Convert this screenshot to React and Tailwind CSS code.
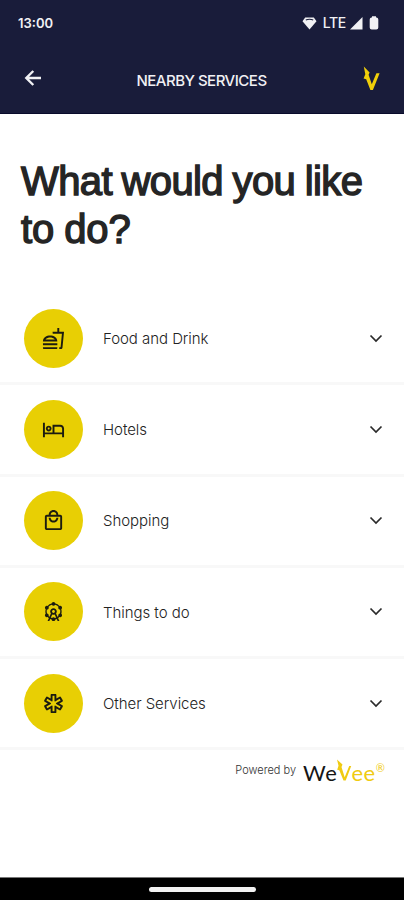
import React from 'react';
import {
    MdOutlineFastfood,
    MdOutlineHotel,
    MdOutlineLocalMall,
    MdOutlineAttractions,
    MdOutlineEmergency,
} from 'react-icons/md';

const services = [
    { label: 'Food and Drink', icon: MdOutlineFastfood },
    { label: 'Hotels', icon: MdOutlineHotel },
    { label: 'Shopping', icon: MdOutlineLocalMall },
    { label: 'Things to do', icon: MdOutlineAttractions },
    { label: 'Other Services', icon: MdOutlineEmergency },
];

function StatusBar() {
    return (
        <div className="h-[46px] pl-[18px] pr-[25px] flex items-center justify-between text-[#f1f1f4]">
            <span className="text-[13px] leading-none font-semibold">13:00</span>
            <div className="flex items-center">
                <svg width="15" height="13" viewBox="0 0 15 13" className="mr-[6px]">
                    <path d="M3.2 0.5h8.6L14.5 4.2 7.5 12.6 0.5 4.2z" fill="currentColor" />
                    <path d="M3.8 3.1q3.7-1.6 7.4 0" fill="none" stroke="#191c3a" strokeWidth="1.1" />
                </svg>
                <span className="text-[14px] leading-none font-medium tracking-[-0.3px] mr-1">LTE</span>
                <svg width="13" height="13" viewBox="0 0 13 13" className="mr-[6px]">
                    <path d="M12.5 0v12.5H0z" fill="currentColor" />
                </svg>
                <svg width="10" height="14" viewBox="0 0 10 14">
                    <path d="M3 0.3h4v1.2h0.8q1.5 0.4 1.5 2v8q0 2-2 2H2.7q-2 0-2-2v-8q0-1.6 1.5-2H3z" fill="currentColor" />
                </svg>
            </div>
        </div>
    );
}

function Header() {
    return (
        <div className="h-[67px] pl-[24px] pr-[24px] flex items-center justify-between text-[#f1f1f4]">
            <svg width="18" height="18" viewBox="0 0 18 18" className="mb-[3px]">
                <path d="M17 9H2.5M9.3 2L2.3 9l7 7" fill="none" stroke="currentColor" strokeWidth="2.4" />
            </svg>
            <h2 className="mt-[2px] mr-[2px] text-[15px] leading-none font-medium tracking-[-0.5px] whitespace-nowrap">
                NEARBY SERVICES
            </h2>
            <svg width="17" height="25" viewBox="0 0 17 25" className="mb-[3px]">
                <path d="M0.8 0.5L6.6 6.4 5.6 8.8 8.8 18.3 13.4 7.2h3.2L9.9 24H7.4L3.2 13.2 0.6 12.6 2.3 8.2z" fill="#f0cf0a" />
            </svg>
        </div>
    );
}

function ServiceRow({ label, icon: Icon }) {
    return (
        <button className="w-full h-[91.25px] pl-[24px] pr-[21px] flex items-center border-b-[3px] border-[#f8f8f8] text-left">
            <span className="size-[59px] shrink-0 rounded-full bg-[#e8cf04] flex items-center justify-center text-[#1c1c10]">
                <Icon size={23} />
            </span>
            <span className="mt-[2px] ml-[20px] flex-1 text-[15px] font-light tracking-[-0.05px] text-[#222]">{label}</span>
            <svg width="14" height="9" viewBox="0 0 14 9">
                <path d="M1.5 1.5L7 7l5.5-5.5" fill="none" stroke="#2a2a2a" strokeWidth="1.7" />
            </svg>
        </button>
    );
}

function WeVeeLogo() {
    return (
        <div className="flex items-start font-['Lato','Liberation_Sans',sans-serif] text-[22px] leading-[26px]">
            <span className="text-[#151515] tracking-[0.6px]">We</span>
            <svg width="16" height="23" viewBox="0 0 16 23" className="-ml-px -mt-px">
                <path d="M1 0.5L6.5 5.5 5.5 8 8.7 18.3 13.2 7h2L9.7 21.5H7.5L3.3 11.2 1.2 10.8 2.5 6.8z" fill="#f0cb12" />
            </svg>
            <span className="-ml-px text-[#f0cb12] tracking-[0.6px]">ee</span>
            <span className="text-[#f0cb12] text-[11px] leading-[15px]">®</span>
        </div>
    );
}

export default function App() {
    return (
        <div className="w-[404px] h-[900px] flex flex-col bg-white overflow-hidden font-['Inter','Liberation_Sans',sans-serif]">
            <div className="bg-[#191c3a] border-b border-[#090b2b]">
                <StatusBar />
                <Header />
            </div>

            <h1 className="mt-[43px] pl-[21px] font-['Liberation_Sans',Arial,sans-serif] text-[40px] leading-[48px] font-normal tracking-[-0.6px] [word-spacing:-1px] text-[#252525] [-webkit-text-stroke:1.4px_#252525]">
                What would you like
                <br />
                <span className="tracking-[-0.1px]">to do?</span>
            </h1>

            <div className="mt-[41px]">
                {services.map((service) => (
                    <ServiceRow key={service.label} {...service} />
                ))}
            </div>

            <div className="mt-[10px] pr-[19px] flex items-start justify-end">
                <span className="mt-[3px] mr-[7px] text-[11px] leading-[14px] font-light text-[#333]">Powered by</span>
                <WeVeeLogo />
            </div>

            <div className="mt-auto h-[23px] bg-black border-t border-[#777] flex items-center justify-center">
                <div className="w-[107px] h-[5px] rounded-full bg-[#f2f2f2]" />
            </div>
        </div>
    );
}
